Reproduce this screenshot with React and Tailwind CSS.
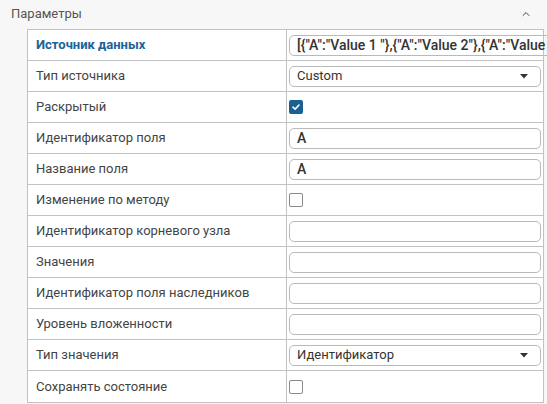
import { ChevronUp } from 'lucide-react';

const rows = [
    { label: "Источник данных", kind: "text", value: '[{"A":"Value 1 "},{"A":"Value 2"},{"A":"Value 3"}]', accent: true },
    { label: "Тип источника", kind: "select", value: "Custom" },
    { label: "Раскрытый", kind: "check", checked: true },
    { label: "Идентификатор поля", kind: "text", value: "A" },
    { label: "Название поля", kind: "text", value: "A" },
    { label: "Изменение по методу", kind: "check", checked: false },
    { label: "Идентификатор корневого узла", kind: "text", value: "" },
    { label: "Значения", kind: "text", value: "" },
    { label: "Идентификатор поля наследников", kind: "text", value: "" },
    { label: "Уровень вложенности", kind: "text", value: "" },
    { label: "Тип значения", kind: "select", value: "Идентификатор" },
    { label: "Сохранять состояние", kind: "check", checked: false },
];

function Field({ row }) {
    if (row.kind === "check") {
        return row.checked ? (
            <div className="w-[14px] h-[14px] rounded-[2px] bg-[#1c5f92] flex items-center justify-center">
                <svg width="10" height="10" viewBox="0 0 10 10" fill="none">
                    <path d="M2 5.2 L4.1 7.1 L8 3" stroke="white" strokeWidth="1.6" strokeLinecap="round" strokeLinejoin="round" />
                </svg>
            </div>
        ) : (
            <div className="w-[14px] h-[14px] rounded-[2px] border border-[#8a8a8a] bg-white" />
        );
    }
    if (row.kind === "select") {
        return (
            <div className="h-[21px] w-full rounded-[5px] border border-[#b9b9b9] flex items-center justify-between pl-[7px] pr-[12px] text-[13px] text-[#333]">
                <span>{row.value}</span>
                <svg width="8" height="5" viewBox="0 0 8 5"><path d="M0 0 H8 L4 4.5 Z" fill="#333" /></svg>
            </div>
        );
    }
    return (
        <div className="h-[21px] w-full rounded-[5px] border border-[#b9b9b9] flex items-center pl-[7px] text-[14px] font-medium text-[#333] overflow-hidden whitespace-nowrap">
            {row.value}
        </div>
    );
}

export default function App() {
    return (
        <div className="w-[547px] h-[404px] bg-[#f7f7f7] overflow-hidden" style={{ fontFamily: 'Roboto, "Noto Sans", sans-serif' }}>
            <div className="h-[29px] flex items-center justify-between pl-[11px] pr-[15px] pb-[2px]">
                <span className="text-[13px] text-[#555]">Параметры</span>
                <ChevronUp className="w-[12px] h-[12px] text-[#444]" strokeWidth={2} />
            </div>

            <div className="ml-[27px] mr-[3px] border border-[#c2c2c2] bg-white">
                {rows.map((row, i) => (
                    <div key={i} className={`grid grid-cols-[258px_1fr] h-[31px] ${i < rows.length - 1 ? "border-b border-[#c2c2c2]" : ""}`}>
                        <div className={`flex items-center pl-[8px] text-[13px] ${row.accent ? "font-bold text-[#1b6398]" : "text-[#444]"}`}>
                            {row.label}
                        </div>
                        <div className="border-l border-[#c2c2c2] flex items-center px-[2px]">
                            <Field row={row} />
                        </div>
                    </div>
                ))}
            </div>
        </div>
    );
}
